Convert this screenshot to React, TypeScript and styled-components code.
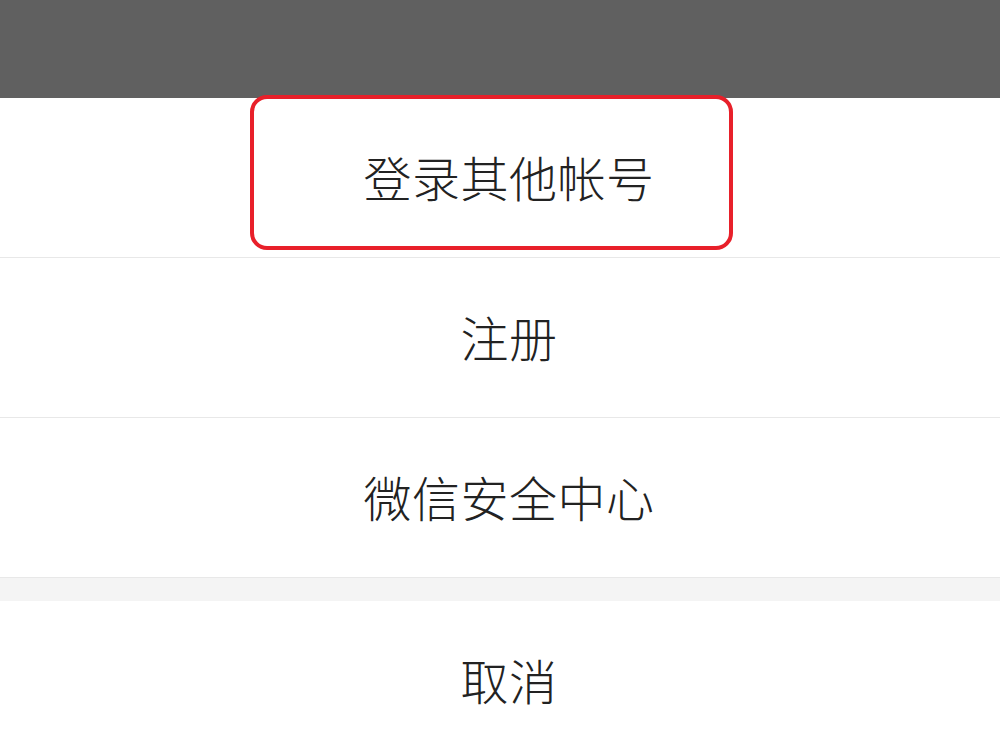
import React from "react";
import styled, { createGlobalStyle } from "styled-components";

const GlobalStyle = createGlobalStyle`
  html, body {
    margin: 0;
    padding: 0;
    background: #ffffff;
  }
  body {
    font-family: "Noto Sans CJK SC", "Noto Sans", sans-serif;
    overflow: hidden;
  }
`;

const Screen = styled.div`
  width: 1000px;
  height: 750px;
  display: flex;
  flex-direction: column;
  position: relative;
  overflow: hidden;
`;

const Mask = styled.div`
  height: 98px;
  flex-shrink: 0;
  background: #606060;
`;

const Sheet = styled.div`
  display: flex;
  flex-direction: column;
  background: #ffffff;
`;

const Item = styled.div`
  height: 160px;
  box-sizing: border-box;
  border-bottom: 1px solid #e8e8e8;
  display: flex;
  align-items: center;
  justify-content: center;
  padding-left: 18px;
  padding-bottom: 4px;
  font-size: 48px;
  font-weight: 300;
  letter-spacing: 0.5px;
  color: #222222;
  position: relative;
`;

const Gap = styled.div`
  height: 23px;
  background: #f4f4f4;
`;

const Highlight = styled.div`
  position: absolute;
  left: 250px;
  top: -3px;
  width: 483px;
  height: 155px;
  box-sizing: border-box;
  border: 4px solid #e8202a;
  border-radius: 17px;
  pointer-events: none;
`;

const items = ["登录其他帐号", "注册", "微信安全中心"];

export default function App() {
  return (
    <>
      <GlobalStyle />
      <Screen>
        <Mask />
        <Sheet>
          {items.map((label, i) => (
            <Item key={label}>
              {i === 0 && <Highlight />}
              {label}
            </Item>
          ))}
          <Gap />
          <Item>取消</Item>
        </Sheet>
      </Screen>
    </>
  );
}
